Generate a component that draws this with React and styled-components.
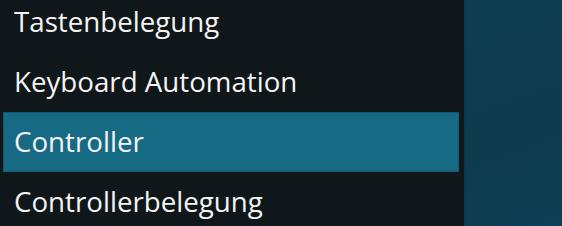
import React from "react";
import styled, { createGlobalStyle } from "styled-components";

const Global = createGlobalStyle`
  html, body { margin: 0; padding: 0; background: #10171a; overflow: hidden; }
  #root { height: 226px; }
`;

const Layout = styled.div`
  display: flex;
  width: 562px;
  height: 226px;
  overflow: hidden;
`;

const Sidebar = styled.nav`
  width: 464px;
  flex: none;
  background: #10171a;
  overflow: hidden;
`;

const List = styled.ul`
  list-style: none;
  margin: -8px 0 0 0;
  padding: 0;
`;

const Item = styled.li`
  box-sizing: border-box;
  height: 60px;
  margin: 0 5px 0 3px;
  padding: 0 0 3px 10px;
  display: flex;
  align-items: center;
  font-family: "Open Sans", "Noto Sans", sans-serif;
  font-size: 27.7px;
  color: #f4f4f4;
  white-space: nowrap;
  background: ${(p) => (p.$active ? "#176a84" : "transparent")};
  border: 1px solid ${(p) => (p.$active ? "#135a70" : "transparent")};
`;

const Content = styled.main`
  flex: 1;
  background: linear-gradient(160deg, #0f3d52 0%, #0f3b4f 60%, #0f3f55 100%);
  border-left: 1px solid #0d3344;
`;

const items = ["Tastenbelegung", "Keyboard Automation", "Controller", "Controllerbelegung"];

export default function App() {
  return (
    <>
      <Global />
      <Layout>
        <Sidebar>
          <List>
            {items.map((t) => (
              <Item key={t} $active={t === "Controller"}>{t}</Item>
            ))}
          </List>
        </Sidebar>
        <Content />
      </Layout>
    </>
  );
}
